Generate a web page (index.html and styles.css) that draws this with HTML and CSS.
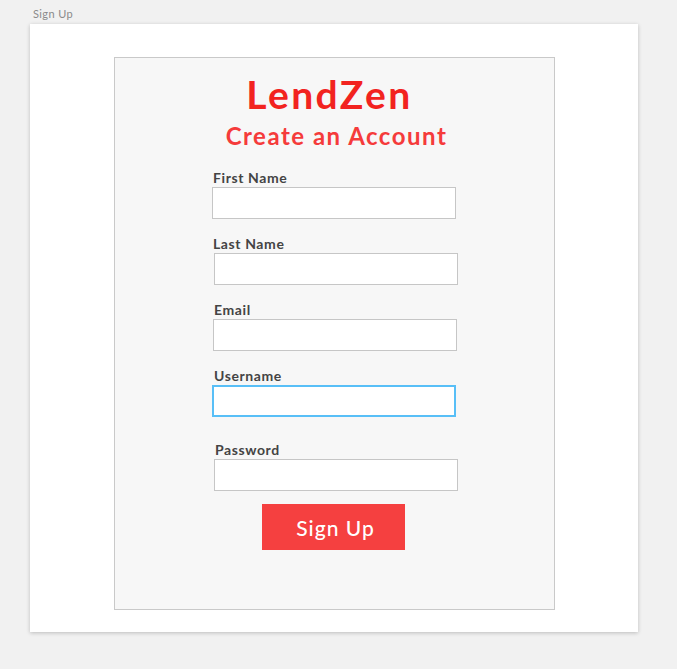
FILE: index.html
```html
<!DOCTYPE html>
<html>
<head>
<meta charset="utf-8">
<link rel="stylesheet" href="styles.css">
</head>
<body>
<div class="caption">Sign Up</div>
<div class="artboard">
  <div class="panel">
    <h1 class="brand">LendZen</h1>
    <h2 class="subtitle">Create an Account</h2>
    <form class="form">
      <div class="field f1">
        <label class="label">First Name</label>
        <input class="input" type="text">
      </div>
      <div class="field f2">
        <label class="label">Last Name</label>
        <input class="input" type="text">
      </div>
      <div class="field f3">
        <label class="label">Email</label>
        <input class="input" type="text">
      </div>
      <div class="field f4">
        <label class="label">Username</label>
        <input class="input focus" type="text">
      </div>
      <div class="field f5">
        <label class="label">Password</label>
        <input class="input" type="password">
      </div>
      <div class="actions">
        <button class="button" type="button">Sign Up</button>
      </div>
    </form>
  </div>
</div>
</body>
</html>
```
FILE: styles.css
```css
* { box-sizing: border-box; }
html, body { margin: 0; padding: 0; }
body {
  background: #f1f1f1;
  font-family: Lato, "Open Sans", sans-serif;
  width: 677px;
  height: 669px;
  overflow: hidden;
}
.caption {
  font-size: 11px;
  color: #8a8a8a;
  padding: 7px 0 0 33px;
  height: 24px;
  line-height: 14px;
  letter-spacing: 0.4px;
}
.artboard {
  margin-left: 30px;
  width: 608px;
  height: 608px;
  background: #fff;
  box-shadow: 0 1px 4px rgba(0,0,0,0.22);
  padding-top: 33px;
  padding-left: 84px;
}
.panel {
  width: 441px;
  height: 553px;
  background: #f7f7f7;
  border: 1px solid #c9c9c9;
  text-align: center;
}
.brand {
  margin: 12px 0 0 0;
  font-size: 39px;
  line-height: 48px;
  font-weight: 700;
  color: #f2231f;
  letter-spacing: 2.4px;
  padding-right: 10px;
}
.subtitle {
  margin: 3px 0 0 0;
  font-size: 24px;
  line-height: 30px;
  font-weight: 700;
  color: #f53b3b;
  letter-spacing: 1.5px;
  padding-left: 4px;
}
.form {
  margin: 0;
  padding-left: 97px;
  text-align: left;
  display: flex;
  flex-direction: column;
}
.field {
  display: flex;
  flex-direction: column;
  align-items: flex-start;
}
.label {
  font-size: 14px;
  line-height: 17px;
  font-weight: 700;
  color: #444;
  letter-spacing: 0.6px;
  padding-left: 1px;
  margin-bottom: 1px;
}
.input {
  width: 244px;
  height: 32px;
  border: 1px solid #c6c6c6;
  background: #fff;
  margin: 0;
  padding: 0 6px;
  outline: none;
  font: inherit;
}
.input.focus {
  border: 2px solid #58bff7;
}
.f1 { margin-top: 18px; }
.f2 { margin-top: 16px; margin-left: 2px; }
.f2 .label { margin-left: -2px; }
.f3 { margin-top: 16px; margin-left: 1px; }
.f4 { margin-top: 16px; }
.f4 .label { margin-left: 1px; }
.f5 { margin-top: 24px; margin-left: 2px; }
.actions {
  padding-left: 50px;
  margin-top: 13px;
}
.button {
  width: 143px;
  height: 46px;
  border: none;
  background: #f54040;
  color: #fff;
  font-family: Lato, sans-serif;
  font-size: 21px;
  font-weight: 500;
  letter-spacing: 1px;
  padding: 0 0 0 4px;
  cursor: pointer;
}
```
